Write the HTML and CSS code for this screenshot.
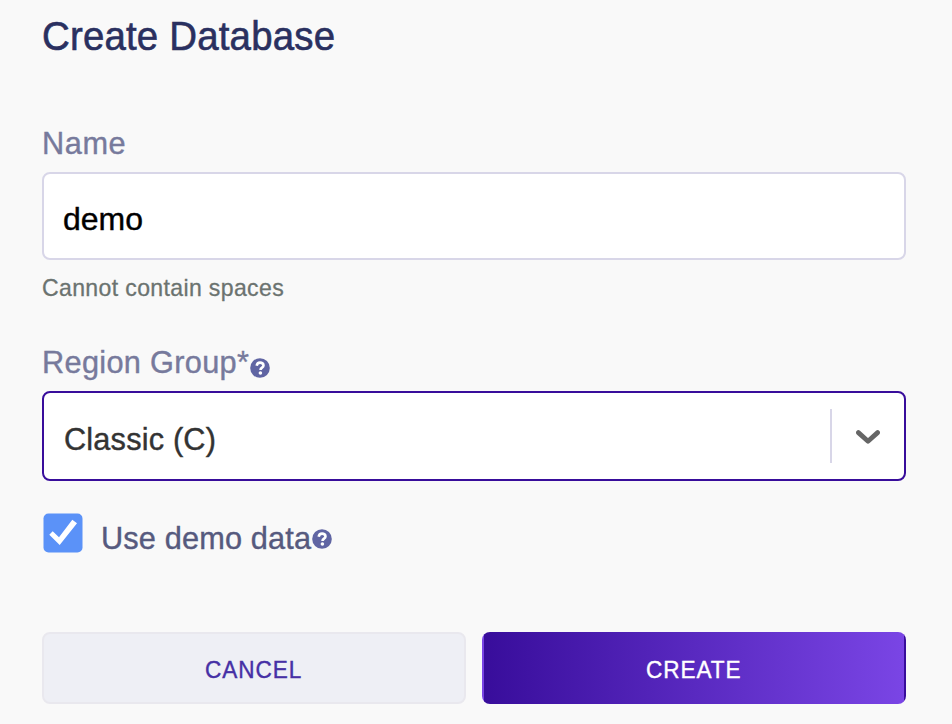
FILE: index.html
```html
<!DOCTYPE html>
<html lang="en">
<head>
<meta charset="utf-8">
<title>Create Database</title>
<link rel="stylesheet" href="styles.css">
</head>
<body>
<form class="form">
  <h1 class="title"><span class="narrow title-text">Create Database</span></h1>
  <label class="label" for="name"><span class="narrow name-text">Name</span></label>
  <input class="input" id="name" type="text" value="demo">
  <p class="hint"><span class="narrow hint-text">Cannot contain spaces</span></p>
  <div class="label region"><span class="narrow region-text">Region Group*</span><svg class="help" viewBox="0 0 20 20"><circle cx="10" cy="10" r="9.8" fill="#6065a3"/><path d="M6.7 7.8C7 5.6 8.3 4.6 10.1 4.6c2 0 3.4 1.1 3.4 2.8 0 2.3-3 2.1-3 4.5" fill="none" stroke="#fff" stroke-width="2.6"/><circle cx="10.4" cy="15" r="1.8" fill="#fff"/></svg></div>
  <div class="select">
    <span class="value"><span class="narrow value-text">Classic (C)</span></span>
    <span class="divider"></span>
    <span class="arrow"><svg width="24" height="14" viewBox="0 0 24 14"><path d="M2.4 2.6L12 11.2L21.6 2.6" fill="none" stroke="#666" stroke-width="4.8" stroke-linecap="round" stroke-linejoin="round"/></svg></span>
  </div>
  <div class="check">
    <svg class="box" viewBox="0 0 40 40"><rect x=".5" y=".5" width="39" height="39" rx="5" fill="#5b92f8"/><path d="M6.3 21.7L9.7 18.3L16 24.3L29.3 6.7L34 10.3L16.7 32Z" fill="#fff"/></svg>
    <span class="narrow check-text">Use demo data</span><svg class="help" viewBox="0 0 20 20"><circle cx="10" cy="10" r="9.8" fill="#6065a3"/><path d="M6.7 7.8C7 5.6 8.3 4.6 10.1 4.6c2 0 3.4 1.1 3.4 2.8 0 2.3-3 2.1-3 4.5" fill="none" stroke="#fff" stroke-width="2.6"/><circle cx="10.4" cy="15" r="1.8" fill="#fff"/></svg>
  </div>
  <div class="actions">
    <button class="button cancel" type="button"><span class="button-text">CANCEL</span></button>
    <button class="button create" type="button"><span class="button-text">CREATE</span></button>
  </div>
</form>
</body>
</html>
```
FILE: styles.css
```css
* { box-sizing: border-box; }
body {
  margin: 0;
  height: 724px;
  overflow: hidden;
  background: #f9f9f9;
  font-family: "Liberation Sans", Arial, sans-serif;
}
.form { width: 864px; margin: 0 0 0 42px; padding-top: 12px; }
.narrow {
  display: block;
  white-space: nowrap;
  transform: scaleX(0.96);
  transform-origin: left center;
}
.title {
  margin: 0 0 63px;
  font-size: 40px;
  line-height: 48px;
  font-weight: 400;
  color: #2a3060;
  -webkit-text-stroke: 0.6px currentColor;
}
.title-text { letter-spacing: 0.2px; }
.label {
  display: flex;
  height: 40px;
  margin-bottom: 9px;
  font-size: 32px;
  line-height: 40px;
  color: #777a9c;
  -webkit-text-stroke: 0.4px currentColor;
}
.name-text { letter-spacing: 0.6px; }
.region-text { width: 208px; letter-spacing: 0.32px; }
.input, .select {
  width: 100%;
  border: 2px solid #d8d6e8;
  border-radius: 8px;
  background: #fff;
  font: 32px "Liberation Sans", Arial, sans-serif;
}
.input {
  display: block;
  height: 88px;
  padding: 6px 19px 0;
  color: #000;
  outline: none;
  -webkit-text-stroke: 0.4px currentColor;
}
.hint {
  margin: 14px 0 40px;
  font-size: 24px;
  line-height: 28px;
  color: #6b7370;
  -webkit-text-stroke: 0.3px currentColor;
}
.hint-text { letter-spacing: 0.38px; }
.help { width: 20px; height: 20px; flex: none; }
.region .help { margin-top: 16px; }
.select {
  display: flex;
  align-items: center;
  height: 90px;
  border-color: #380d9b;
}
.value {
  flex: 1;
  padding: 6px 0 0 20px;
  color: #333;
  -webkit-text-stroke: 0.4px currentColor;
}
.value-text { letter-spacing: 0.18px; }
.divider { width: 2px; height: 54px; background: #d8d6e8; }
.arrow { display: flex; justify-content: center; width: 72px; padding-top: 2px; }
.check {
  display: flex;
  height: 45px;
  margin: 32px 0 74px 1px;
  font-size: 32px;
  line-height: 40px;
  color: #565a7e;
}
.box { width: 40px; height: 40px; }
.check-text {
  width: 211px;
  margin: 5px 0 0 18px;
  letter-spacing: 0.15px;
  -webkit-text-stroke: 0.4px currentColor;
}
.check .help { margin-top: 16px; }
.actions { display: grid; grid-template-columns: 1fr 1fr; gap: 16px; }
.button {
  height: 72px;
  padding: 3px 0 0;
  border: 2px solid #e9e8ee;
  border-radius: 8px;
  background-color: #eeeff5;
  color: #4630a5;
  font: 24px "Liberation Sans", Arial, sans-serif;
  letter-spacing: 1px;
  -webkit-text-stroke: 0.4px currentColor;
}
.button-text { display: inline-block; transform: scaleX(0.94); }
.create {
  border-color: transparent;
  background: linear-gradient(90deg, #380d9b, #7a45e5);
  color: #fff;
}
```
